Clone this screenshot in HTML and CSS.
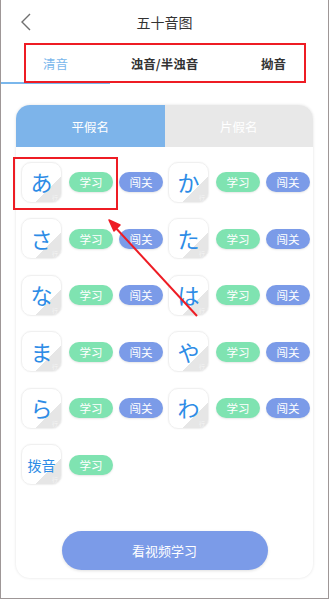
FILE: index.html
```html
<!DOCTYPE html>
<html lang="zh">
  <head>
    <meta charset="UTF-8" />
    <meta name="viewport" content="width=device-width, initial-scale=1.0" />
    <title>五十音图</title>
    <link rel="stylesheet" href="styles.css">
  </head>
  <body>
    <div class="screen">
      <!-- Top bar -->
      <div class="topbar">
        <svg class="back" width="12" height="18" viewBox="0 0 12 18">
          <path d="M10 1 L2 9 L10 17" fill="none" stroke="#707070" stroke-width="1.4" />
        </svg>
        <span class="title">五十音图</span>
        <span></span>
      </div>

      <!-- Tabs -->
      <div class="tabs">
        <span class="tab active">清音</span>
        <span class="tab">浊音/半浊音</span>
        <span class="tab">拗音</span>
      </div>

      <!-- Kana card -->
      <div class="card">
        <div class="segment">
          <span class="seg on">平假名</span>
          <span class="seg">片假名</span>
        </div>

        <div class="grid">
          <div class="cell"><div class="tile"><span class="kana">あ</span><span class="row-tag">行</span></div><span class="pill learn">学习</span><span class="pill pass">闯关</span></div>
          <div class="cell"><div class="tile"><span class="kana">か</span><span class="row-tag">行</span></div><span class="pill learn">学习</span><span class="pill pass">闯关</span></div>
          <div class="cell"><div class="tile"><span class="kana">さ</span><span class="row-tag">行</span></div><span class="pill learn">学习</span><span class="pill pass">闯关</span></div>
          <div class="cell"><div class="tile"><span class="kana">た</span><span class="row-tag">行</span></div><span class="pill learn">学习</span><span class="pill pass">闯关</span></div>
          <div class="cell"><div class="tile"><span class="kana">な</span><span class="row-tag">行</span></div><span class="pill learn">学习</span><span class="pill pass">闯关</span></div>
          <div class="cell"><div class="tile"><span class="kana">は</span><span class="row-tag">行</span></div><span class="pill learn">学习</span><span class="pill pass">闯关</span></div>
          <div class="cell"><div class="tile"><span class="kana">ま</span><span class="row-tag">行</span></div><span class="pill learn">学习</span><span class="pill pass">闯关</span></div>
          <div class="cell"><div class="tile"><span class="kana">や</span><span class="row-tag">行</span></div><span class="pill learn">学习</span><span class="pill pass">闯关</span></div>
          <div class="cell"><div class="tile"><span class="kana">ら</span><span class="row-tag">行</span></div><span class="pill learn">学习</span><span class="pill pass">闯关</span></div>
          <div class="cell"><div class="tile"><span class="kana">わ</span><span class="row-tag">行</span></div><span class="pill learn">学习</span><span class="pill pass">闯关</span></div>
          <div class="cell"><div class="tile"><span class="kana small">拨音</span><span class="row-tag">行</span></div><span class="pill learn">学习</span></div>
        </div>

        <div class="video-btn">看视频学习</div>
      </div>

      <!-- Red annotations drawn over the screenshot -->
      <div class="mark mark-tabs"></div>
      <div class="mark mark-cell"></div>
      <svg class="arrow" width="330" height="600" viewBox="0 0 330 600">
        <line x1="197" y1="316" x2="114" y2="226" stroke="#ee1c24" stroke-width="2" />
        <path d="M109 220 L120 225 L114 231 Z" fill="#ee1c24" stroke="#ee1c24" stroke-width="1.5" stroke-linejoin="round" />
      </svg>
    </div>
  </body>
</html>
```

FILE: styles.css
```css
body {
  margin: 0;
  padding: 0;
  background-color: #fff;
  font-family: "Noto Sans CJK SC", "Noto Sans", sans-serif;
}

.screen {
  position: relative;
  width: 327px;
  height: 598px;
  border-left: 1px solid #9e9797;
  border-right: 1px solid #9e9797;
  border-bottom: 1px solid #9e9797;
  overflow: hidden;
  background: #fff;
}

/* Top bar */
.topbar {
  height: 44px;
  display: grid;
  grid-template-columns: 44px 1fr 44px;
  align-items: center;
}

.back {
  margin-left: 19px;
  margin-top: -1px;
}

.title {
  text-align: center;
  font-size: 14px;
  color: #333;
}

/* Tabs */
.tabs {
  display: flex;
  height: 40px;
}

.tab {
  flex: 1;
  display: flex;
  align-items: center;
  justify-content: center;
  font-size: 12.5px;
  font-weight: bold;
  color: #333;
  border-bottom: 2px solid transparent;
}

.tab.active {
  font-weight: normal;
  color: #7ab7ec;
  border-bottom-color: #7ab7ec;
}

/* Card */
.card {
  margin: 21px 15px 0 15px;
  height: 473px;
  border-radius: 14px;
  box-shadow: 0 0 3px rgba(0, 0, 0, 0.12);
  overflow: hidden;
  display: flex;
  flex-direction: column;
}

.segment {
  display: flex;
  height: 42px;
}

.seg {
  flex: 1;
  display: flex;
  align-items: center;
  justify-content: center;
  font-size: 12.5px;
  color: #fff;
  background-color: #e8e8e8;
}

.seg.on {
  background-color: #7db4ea;
}

.grid {
  display: grid;
  grid-template-columns: 147px 147px;
  grid-auto-rows: 42px;
  row-gap: 14.6px;
  padding: 14px 0 0 5px;
}

.cell {
  display: flex;
  align-items: center;
}

.tile {
  position: relative;
  width: 41px;
  height: 41px;
  border: 1px solid #f0f0f0;
  border-radius: 10px;
  box-sizing: border-box;
  box-shadow: 0 0 2px rgba(0, 0, 0, 0.06);
  background: linear-gradient(135deg, #fff 67%, #e6e6e6 67%);
  display: flex;
  align-items: center;
  justify-content: center;
  overflow: hidden;
}

.kana {
  font-family: "Noto Sans CJK JP", sans-serif;
  font-size: 22px;
  color: #2d8ce6;
  margin-top: -2px;
}

.kana.small {
  font-family: "Noto Sans CJK SC", sans-serif;
  font-size: 14px;
  margin-top: 0;
}

.row-tag {
  position: absolute;
  right: 3px;
  bottom: 0;
  font-size: 6px;
  color: #f4f4f4;
}

.pill {
  width: 44px;
  height: 20px;
  border-radius: 10px;
  display: flex;
  align-items: center;
  justify-content: center;
  font-size: 11.5px;
  color: #fff;
  box-shadow: 0 1px 2px rgba(0, 0, 0, 0.1);
}

.pill.learn {
  background-color: #7fe3b1;
  margin-left: 7px;
}

.pill.pass {
  background-color: #7b9be8;
  margin-left: 6px;
}

/* Bottom button */
.video-btn {
  align-self: center;
  margin-top: auto;
  margin-bottom: 8px;
  width: 206px;
  height: 39px;
  border-radius: 20px;
  background-color: #7b9be8;
  color: #fff;
  font-size: 13px;
  display: flex;
  align-items: center;
  justify-content: center;
  box-shadow: 0 1px 3px rgba(0, 0, 0, 0.12);
}

/* Red annotation marks */
.mark {
  position: absolute;
  border: 2px solid #ee1c24;
  box-sizing: border-box;
}

.mark-tabs {
  left: 23px;
  top: 43px;
  width: 282px;
  height: 40px;
}

.mark-cell {
  left: 12px;
  top: 157px;
  width: 105px;
  height: 53px;
}

.arrow {
  position: absolute;
  left: -1px;
  top: 0;
}
```
